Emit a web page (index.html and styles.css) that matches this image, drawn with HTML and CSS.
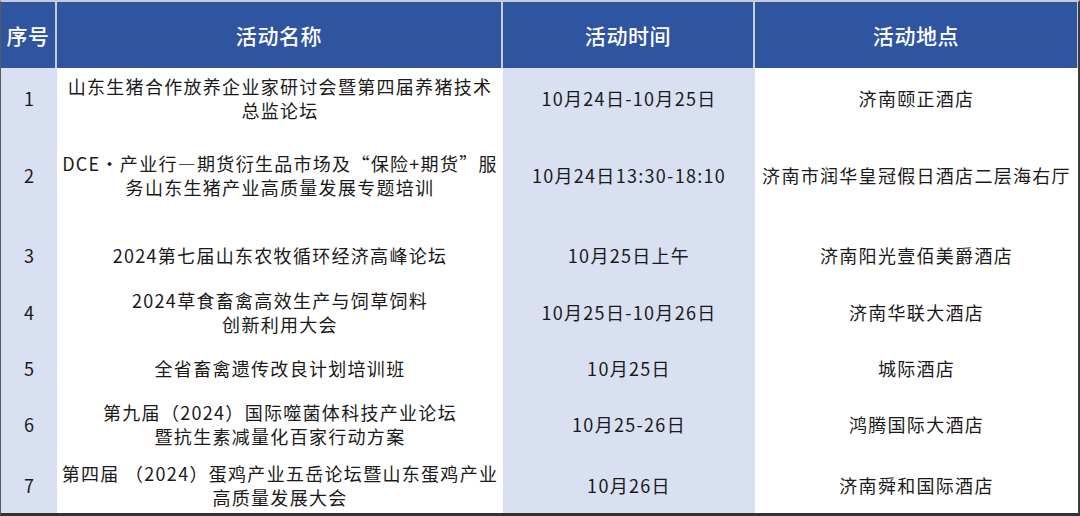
FILE: index.html
```html
<!DOCTYPE html>
<html lang="zh">
<head>
<meta charset="utf-8">
<link rel="stylesheet" href="styles.css">
</head>
<body>
<div class="frame">
  <div class="row head">
    <div class="cell">序号</div>
    <div class="cell">活动名称</div>
    <div class="cell">活动时间</div>
    <div class="cell last">活动地点</div>
  </div>
  <div class="row r1">
    <div class="cell num">1</div>
    <div class="cell">山东生猪合作放养企业家研讨会暨第四届养猪技术<br>总监论坛</div>
    <div class="cell alt">10月24日-10月25日</div>
    <div class="cell">济南颐正酒店</div>
  </div>
  <div class="row r2">
    <div class="cell num">2</div>
    <div class="cell">DCE・产业行—期货衍生品市场及“保险+期货”服<br>务山东生猪产业高质量发展专题培训</div>
    <div class="cell alt">10月24日13:30-18:10</div>
    <div class="cell">济南市润华皇冠假日酒店二层海右厅</div>
  </div>
  <div class="row r3">
    <div class="cell num">3</div>
    <div class="cell">2024第七届山东农牧循环经济高峰论坛</div>
    <div class="cell alt">10月25日上午</div>
    <div class="cell">济南阳光壹佰美爵酒店</div>
  </div>
  <div class="row r4">
    <div class="cell num">4</div>
    <div class="cell">2024草食畜禽高效生产与饲草饲料<br>创新利用大会</div>
    <div class="cell alt">10月25日-10月26日</div>
    <div class="cell">济南华联大酒店</div>
  </div>
  <div class="row r5">
    <div class="cell num">5</div>
    <div class="cell">全省畜禽遗传改良计划培训班</div>
    <div class="cell alt">10月25日</div>
    <div class="cell">城际酒店</div>
  </div>
  <div class="row r6">
    <div class="cell num">6</div>
    <div class="cell">第九届（2024）国际噬菌体科技产业论坛<br>暨抗生素减量化百家行动方案</div>
    <div class="cell alt">10月25-26日</div>
    <div class="cell">鸿腾国际大酒店</div>
  </div>
  <div class="row r7">
    <div class="cell num">7</div>
    <div class="cell">第四届 （2024）蛋鸡产业五岳论坛暨山东蛋鸡产业<br>高质量发展大会</div>
    <div class="cell alt">10月26日</div>
    <div class="cell">济南舜和国际酒店</div>
  </div>
</div>
</body>
</html>
```

FILE: styles.css
```css
html, body {
  margin: 0;
  padding: 0;
  background: #ffffff;
}
.frame {
  width: 1080px;
  height: 516px;
  box-sizing: border-box;
  border-top: 2px solid #c9ccd3;
  border-left: 1px solid #5a5a5a;
  border-right: 2px solid #3c3c3c;
  border-bottom: 3px solid #333333;
  font-family: "Noto Sans CJK SC", "Noto Sans", sans-serif;
  color: #1a1a1a;
  overflow: hidden;
}
.row {
  display: grid;
  grid-template-columns: 56px 446px 252px 1fr;
}
.cell {
  display: flex;
  align-items: center;
  justify-content: center;
  text-align: center;
  white-space: nowrap;
  font-size: 18px;
  line-height: 24px;
  letter-spacing: 1.3px;
}
.row > .cell:first-child,
.cell.alt {
  background: #d8e0f1;
}
.head {
  height: 66px;
}
.head > .cell,
.head > .cell:first-child {
  background: #2f54a0;
  color: #ffffff;
  font-size: 21px;
  letter-spacing: 0.6px;
  font-weight: 500;
  border-right: 2px solid #c4cde0;
  box-sizing: border-box;
}
.head > .cell.last {
  border-right: 1px solid #c4cde0;
}
.cell.num {
  letter-spacing: 0;
  font-size: 18px;
}
.r1 { height: 62px; }
.r1 > .cell { padding-bottom: 2px; }
.r2 { height: 92px; }
.r2 > .cell { padding-bottom: 2px; }
.r3 { height: 62px; }
.r3 > .cell { padding-top: 4px; }
.r4 { height: 56px; }
.r5 { height: 55px; }
.r6 { height: 58px; }
.r7 { height: 60px; }
.r7 > .cell { padding-top: 4px; }
```
